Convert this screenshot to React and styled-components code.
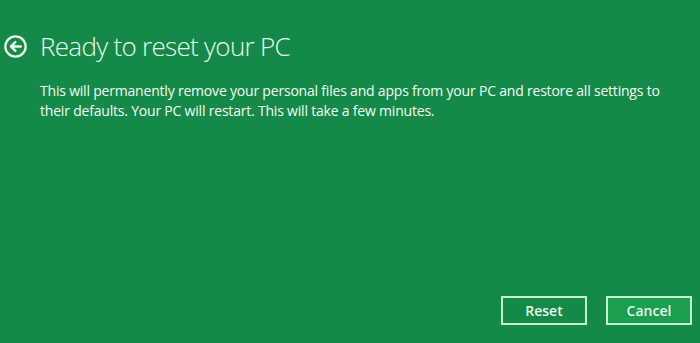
import styled, { createGlobalStyle } from "styled-components";

const GlobalStyle = createGlobalStyle`
  html, body {
    margin: 0;
    padding: 0;
    background: #158a48;
  }
`;

const Screen = styled.div`
  width: 700px;
  height: 343px;
  box-sizing: border-box;
  background: #158a48;
  color: #ffffff;
  font-family: "Open Sans", "Liberation Sans", sans-serif;
  display: flex;
  flex-direction: column;
  padding: 29px 8px 18px 4px;
`;

const Header = styled.div`
  display: flex;
  align-items: center;
  gap: 13px;
`;

const BackButton = styled.button`
  width: 23px;
  height: 23px;
  padding: 0;
  border: none;
  background: none;
  display: flex;
  cursor: pointer;
`;

const Title = styled.h1`
  margin: 0;
  font-size: 26px;
  font-weight: 300;
  letter-spacing: -0.7px;
  color: #e8f8ea;
  line-height: 34px;
`;

const Message = styled.p`
  margin: 18px 0 0 36px;
  font-size: 14px;
  line-height: 20px;
  color: #f2fbf3;
  letter-spacing: -0.2px;
  max-width: 640px;
`;

const Actions = styled.div`
  margin-top: auto;
  display: flex;
  justify-content: flex-end;
  gap: 19px;
`;

const ActionButton = styled.button`
  width: 86px;
  height: 29px;
  box-sizing: border-box;
  border: 2px solid #c6f0cb;
  background: ${(p) => (p.$primary ? "#1a9f51" : "transparent")};
  color: #e6f8e8;
  font-family: "Open Sans", "Liberation Sans", sans-serif;
  font-size: 14px;
  font-weight: 600;
  cursor: pointer;
`;

function BackIcon() {
  return (
    <svg width="23" height="23" viewBox="0 0 24 24">
      <circle cx="12" cy="12" r="10.6" fill="none" stroke="#e8f8ea" strokeWidth="2.4" />
      <path
        d="M17.5 12H7.5M11.8 7.5L7.3 12l4.5 4.5"
        fill="none"
        stroke="#e8f8ea"
        strokeWidth="2.6"
        strokeLinecap="round"
        strokeLinejoin="round"
      />
    </svg>
  );
}

export default function App() {
  return (
    <Screen>
      <GlobalStyle />
      <Header>
        <BackButton aria-label="Back">
          <BackIcon />
        </BackButton>
        <Title>Ready to reset your PC</Title>
      </Header>
      <Message>
        This will permanently remove your personal files and apps from your PC and restore all settings to
        their defaults. Your PC will restart. This will take a few minutes.
      </Message>
      <Actions>
        <ActionButton>Reset</ActionButton>
        <ActionButton $primary>Cancel</ActionButton>
      </Actions>
    </Screen>
  );
}
